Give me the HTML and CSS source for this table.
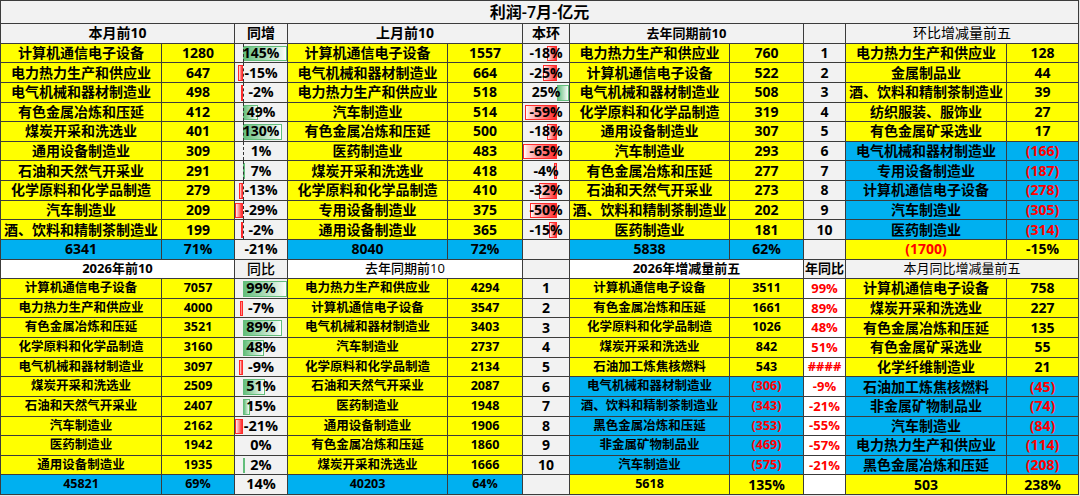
FILE: index.html
```html
<!DOCTYPE html>
<html lang="zh-CN">
<head>
<meta charset="utf-8">
<title>利润-7月-亿元</title>
<link rel="stylesheet" href="styles.css">
</head>
<body>
<div class="sheet">
  <div class="c title">利润-7月-亿元</div>

  <!-- top header -->
  <div class="c g hd span2">本月前10</div>
  <div class="c g hd">同增</div>
  <div class="c g hd span2">上月前10</div>
  <div class="c g hd">本环</div>
  <div class="c g hd hd13 span2">去年同期前10</div>
  <div class="c g hd"></div>
  <div class="c g hd hdn span2">环比增减量前五</div>

  <!-- top rows -->
  <div class="c y">计算机通信电子设备</div><div class="c y">1280</div>
  <div class="c g pct"><i class="axis"></i><i class="bar pos" style="left:8px;width:44px"></i><span>145%</span></div>
  <div class="c y">计算机通信电子设备</div><div class="c y">1557</div>
  <div class="c g pct"><i class="bar neg" style="right:12px;width:10px"></i><span>-18%</span></div>
  <div class="c y">电力热力生产和供应业</div><div class="c y">760</div>
  <div class="c g">1</div>
  <div class="c y">电力热力生产和供应业</div><div class="c y">128</div>

  <div class="c y">电力热力生产和供应业</div><div class="c y">647</div>
  <div class="c g pct"><i class="axis"></i><i class="bar neg" style="right:44px;width:5px"></i><span>-15%</span></div>
  <div class="c y">电气机械和器材制造业</div><div class="c y">664</div>
  <div class="c g pct"><i class="bar neg" style="right:12px;width:14px"></i><span>-25%</span></div>
  <div class="c y">计算机通信电子设备</div><div class="c y">522</div>
  <div class="c g">2</div>
  <div class="c y">金属制品业</div><div class="c y">44</div>

  <div class="c y">电气机械和器材制造业</div><div class="c y">498</div>
  <div class="c g pct"><i class="axis"></i><i class="bar neg" style="right:44px;width:1px"></i><span>-2%</span></div>
  <div class="c y">电力热力生产和供应业</div><div class="c y">518</div>
  <div class="c g pct"><i class="bar pos" style="left:34px;width:12px"></i><span>25%</span></div>
  <div class="c y">电气机械和器材制造业</div><div class="c y">508</div>
  <div class="c g">3</div>
  <div class="c y">酒、饮料和精制茶制造业</div><div class="c y">39</div>

  <div class="c y">有色金属冶炼和压延</div><div class="c y">412</div>
  <div class="c g pct"><i class="axis"></i><i class="bar pos" style="left:8px;width:15px"></i><span>49%</span></div>
  <div class="c y">汽车制造业</div><div class="c y">514</div>
  <div class="c g pct"><i class="bar neg" style="right:12px;width:32px"></i><span>-59%</span></div>
  <div class="c y">化学原料和化学品制造</div><div class="c y">319</div>
  <div class="c g">4</div>
  <div class="c y">纺织服装、服饰业</div><div class="c y">27</div>

  <div class="c y">煤炭开采和洗选业</div><div class="c y">401</div>
  <div class="c g pct"><i class="axis"></i><i class="bar pos" style="left:8px;width:39px"></i><span>130%</span></div>
  <div class="c y">有色金属冶炼和压延</div><div class="c y">500</div>
  <div class="c g pct"><i class="bar neg" style="right:12px;width:10px"></i><span>-18%</span></div>
  <div class="c y">通用设备制造业</div><div class="c y">307</div>
  <div class="c g">5</div>
  <div class="c y">有色金属矿采选业</div><div class="c y">17</div>

  <div class="c y">通用设备制造业</div><div class="c y">309</div>
  <div class="c g pct"><i class="axis"></i><span>1%</span></div>
  <div class="c y">医药制造业</div><div class="c y">483</div>
  <div class="c g pct"><i class="bar neg" style="right:12px;width:34px"></i><span>-65%</span></div>
  <div class="c y">汽车制造业</div><div class="c y">293</div>
  <div class="c g">6</div>
  <div class="c b">电气机械和器材制造业</div><div class="c b red">(166)</div>

  <div class="c y">石油和天然气开采业</div><div class="c y">291</div>
  <div class="c g pct"><i class="axis"></i><i class="bar pos" style="left:8px;width:2px"></i><span>7%</span></div>
  <div class="c y">煤炭开采和洗选业</div><div class="c y">418</div>
  <div class="c g pct"><i class="bar neg" style="right:12px;width:3px"></i><span>-4%</span></div>
  <div class="c y">有色金属冶炼和压延</div><div class="c y">277</div>
  <div class="c g">7</div>
  <div class="c b">专用设备制造业</div><div class="c b red">(187)</div>

  <div class="c y">化学原料和化学品制造</div><div class="c y">279</div>
  <div class="c g pct"><i class="axis"></i><i class="bar neg" style="right:44px;width:4px"></i><span>-13%</span></div>
  <div class="c y">化学原料和化学品制造</div><div class="c y">410</div>
  <div class="c g pct"><i class="bar neg" style="right:12px;width:18px"></i><span>-32%</span></div>
  <div class="c y">石油和天然气开采业</div><div class="c y">273</div>
  <div class="c g">8</div>
  <div class="c b">计算机通信电子设备</div><div class="c b red">(278)</div>

  <div class="c y">汽车制造业</div><div class="c y">209</div>
  <div class="c g pct"><i class="axis"></i><i class="bar neg" style="right:44px;width:8px"></i><span>-29%</span></div>
  <div class="c y">专用设备制造业</div><div class="c y">375</div>
  <div class="c g pct"><i class="bar neg" style="right:12px;width:27px"></i><span>-50%</span></div>
  <div class="c y">酒、饮料和精制茶制造业</div><div class="c y">202</div>
  <div class="c g">9</div>
  <div class="c b">汽车制造业</div><div class="c b red">(305)</div>

  <div class="c y">酒、饮料和精制茶制造业</div><div class="c y">199</div>
  <div class="c g pct"><i class="axis"></i><i class="bar neg" style="right:44px;width:1px"></i><span>-2%</span></div>
  <div class="c y">通用设备制造业</div><div class="c y">365</div>
  <div class="c g pct"><i class="bar neg" style="right:12px;width:8px"></i><span>-15%</span></div>
  <div class="c y">医药制造业</div><div class="c y">181</div>
  <div class="c g">10</div>
  <div class="c b">医药制造业</div><div class="c b red">(314)</div>

  <!-- top summary -->
  <div class="c b">6341</div><div class="c b">71%</div>
  <div class="c g">-21%</div>
  <div class="c b">8040</div><div class="c b">72%</div>
  <div class="c g"></div>
  <div class="c b">5838</div><div class="c b">62%</div>
  <div class="c g"></div>
  <div class="c y red">(1700)</div><div class="c y">-15%</div>

  <!-- bottom header -->
  <div class="c w hd hd13 span2">2026年前10</div>
  <div class="c g hd hdm">同比</div>
  <div class="c w hd hd13 hdm span2">去年同期前10</div>
  <div class="c g"></div>
  <div class="c w hd hd13 span2">2026年增减量前五</div>
  <div class="c g hd hd13">年同比</div>
  <div class="c g hd hd13 hdn span2">本月同比增减量前五</div>

  <!-- bottom rows -->
  <div class="c y s">计算机通信电子设备</div><div class="c y s">7057</div>
  <div class="c g pct p2"><i class="bar pos" style="left:8px;width:44px"></i><span>99%</span></div>
  <div class="c y s">电力热力生产和供应业</div><div class="c y s">4294</div>
  <div class="c g m">1</div>
  <div class="c y s">计算机通信电子设备</div><div class="c y s">3511</div>
  <div class="c w r">99%</div>
  <div class="c y">计算机通信电子设备</div><div class="c y">758</div>

  <div class="c y s">电力热力生产和供应业</div><div class="c y s">4000</div>
  <div class="c g pct p2"><i class="bar neg" style="right:44px;width:3px"></i><span>-7%</span></div>
  <div class="c y s">计算机通信电子设备</div><div class="c y s">3547</div>
  <div class="c g m">2</div>
  <div class="c y s">有色金属冶炼和压延</div><div class="c y s">1661</div>
  <div class="c w r">89%</div>
  <div class="c y">煤炭开采和洗选业</div><div class="c y">227</div>

  <div class="c y s">有色金属冶炼和压延</div><div class="c y s">3521</div>
  <div class="c g pct p2"><i class="bar pos" style="left:8px;width:39px"></i><span>89%</span></div>
  <div class="c y s">电气机械和器材制造业</div><div class="c y s">3403</div>
  <div class="c g m">3</div>
  <div class="c y s">化学原料和化学品制造</div><div class="c y s">1026</div>
  <div class="c w r">48%</div>
  <div class="c y">有色金属冶炼和压延</div><div class="c y">135</div>

  <div class="c y s">化学原料和化学品制造</div><div class="c y s">3160</div>
  <div class="c g pct p2"><i class="bar pos" style="left:8px;width:21px"></i><span>48%</span></div>
  <div class="c y s">汽车制造业</div><div class="c y s">2737</div>
  <div class="c g m">4</div>
  <div class="c y s">煤炭开采和洗选业</div><div class="c y s">842</div>
  <div class="c w r">51%</div>
  <div class="c y">有色金属矿采选业</div><div class="c y">55</div>

  <div class="c y s">电气机械和器材制造业</div><div class="c y s">3097</div>
  <div class="c g pct p2"><i class="bar neg" style="right:44px;width:4px"></i><span>-9%</span></div>
  <div class="c y s">化学原料和化学品制造</div><div class="c y s">2134</div>
  <div class="c g m">5</div>
  <div class="c y s">石油加工炼焦核燃料</div><div class="c y s">543</div>
  <div class="c w r">####</div>
  <div class="c y">化学纤维制造业</div><div class="c y">21</div>

  <div class="c y s">煤炭开采和洗选业</div><div class="c y s">2509</div>
  <div class="c g pct p2"><i class="bar pos" style="left:8px;width:22px"></i><span>51%</span></div>
  <div class="c y s">石油和天然气开采业</div><div class="c y s">2087</div>
  <div class="c g m">6</div>
  <div class="c b s">电气机械和器材制造业</div><div class="c b s red">(306)</div>
  <div class="c w r">-9%</div>
  <div class="c b">石油加工炼焦核燃料</div><div class="c b red">(45)</div>

  <div class="c y s">石油和天然气开采业</div><div class="c y s">2407</div>
  <div class="c g pct p2"><i class="bar pos" style="left:8px;width:7px"></i><span>15%</span></div>
  <div class="c y s">医药制造业</div><div class="c y s">1948</div>
  <div class="c g m">7</div>
  <div class="c b s">酒、饮料和精制茶制造业</div><div class="c b s red">(343)</div>
  <div class="c w r">-21%</div>
  <div class="c b">非金属矿物制品业</div><div class="c b red">(74)</div>

  <div class="c y s">汽车制造业</div><div class="c y s">2162</div>
  <div class="c g pct p2"><i class="bar neg" style="right:44px;width:8px"></i><span>-21%</span></div>
  <div class="c y s">通用设备制造业</div><div class="c y s">1906</div>
  <div class="c g m">8</div>
  <div class="c b s">黑色金属冶炼和压延</div><div class="c b s red">(353)</div>
  <div class="c w r">-55%</div>
  <div class="c b">汽车制造业</div><div class="c b red">(84)</div>

  <div class="c y s">医药制造业</div><div class="c y s">1942</div>
  <div class="c g pct p2"><span>0%</span></div>
  <div class="c y s">有色金属冶炼和压延</div><div class="c y s">1860</div>
  <div class="c g m">9</div>
  <div class="c b s">非金属矿物制品业</div><div class="c b s red">(469)</div>
  <div class="c w r">-57%</div>
  <div class="c b">电力热力生产和供应业</div><div class="c b red">(114)</div>

  <div class="c y s">通用设备制造业</div><div class="c y s">1935</div>
  <div class="c g pct p2"><i class="bar pos" style="left:8px;width:1px"></i><span>2%</span></div>
  <div class="c y s">煤炭开采和洗选业</div><div class="c y s">1666</div>
  <div class="c g m">10</div>
  <div class="c b s">汽车制造业</div><div class="c b s red">(575)</div>
  <div class="c w r">-21%</div>
  <div class="c b">黑色金属冶炼和压延</div><div class="c b red">(208)</div>

  <!-- bottom summary -->
  <div class="c b s">45821</div><div class="c b s">69%</div>
  <div class="c g p2">14%</div>
  <div class="c b s">40203</div><div class="c b s">64%</div>
  <div class="c g"></div>
  <div class="c y s">5618</div><div class="c y">135%</div>
  <div class="c w"></div>
  <div class="c y">503</div><div class="c y">238%</div>
</div>
</body>
</html>
```
FILE: styles.css
```css
html, body {
  margin: 0;
  padding: 0;
}
body {
  background: #e6e6e6;
  font-family: "Open Sans", "Noto Sans CJK SC", sans-serif;
}
.sheet {
  display: grid;
  width: 1079px;
  height: 495px;
  box-sizing: border-box;
  padding: 1px;
  gap: 1px;
  background: #3c3c3c;
  grid-template-columns: 160px 72px 52px 159px 74px 46px 159px 73px 41px 160px 71px;
  grid-template-rows: 22px repeat(24, 1fr);
}
.c {
  position: relative;
  display: flex;
  align-items: center;
  justify-content: center;
  overflow: hidden;
  white-space: nowrap;
  font-size: 14px;
  font-weight: 700;
  line-height: 1;
  color: #000;
}
.title {
  grid-column: 1 / -1;
  background: #f2f2f2;
  font-size: 16px;
  font-weight: 600;
}
.span2 { grid-column: span 2; }
.y { background: #ffff00; }
.b { background: #00b0f0; }
.g { background: #f2f2f2; }
.w { background: #ffffff; }
.red { color: #ff0000; }
.hd { font-size: 14px; font-weight: 700; }
.hd13 { font-size: 13px; }
.hdn { font-weight: 400; }
.hdm { font-weight: 500; }
.s { font-size: 12.5px; font-weight: 700; }
.m { font-weight: 700; }
.r { color: #ff0000; font-size: 13px; font-weight: 700; }
.p2 { font-size: 14.5px; font-weight: 700; }
.pct span {
  position: relative;
  z-index: 1;
}
.bar {
  position: absolute;
  top: 2px;
  bottom: 1px;
  box-sizing: border-box;
}
.pos {
  background: linear-gradient(to right, #63be7b, #e9f5ec 90%, #ffffff);
  border: 1px solid #63be7b;
}
.neg {
  background: linear-gradient(to left, #ff2a2a, #ffd6d6 90%, #ffffff);
  border: 1px solid #ff2a2a;
}
.axis {
  position: absolute;
  left: 8px;
  top: 0;
  bottom: 0;
  border-left: 1px dashed #333;
  z-index: 1;
}
```
